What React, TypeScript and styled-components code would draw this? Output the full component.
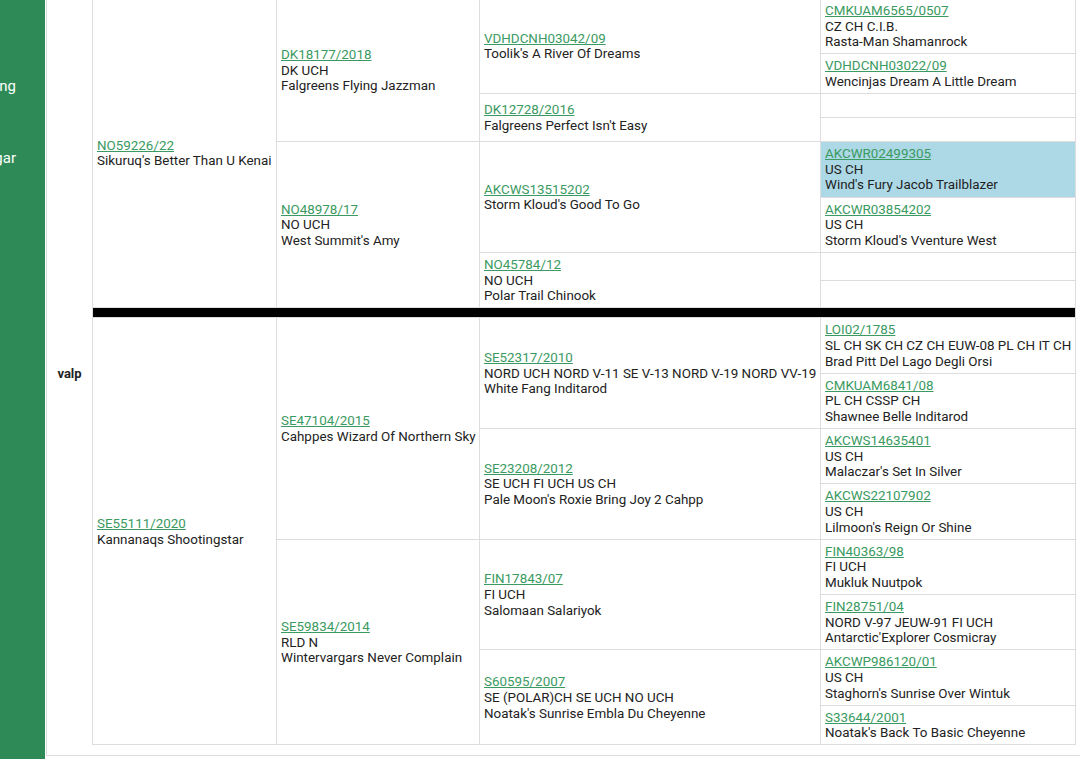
import React from "react";
import styled, { createGlobalStyle } from "styled-components";

const Global = createGlobalStyle`
  html, body { margin: 0; padding: 0; background: #fff; }
  body { font-family: Roboto, "Noto Sans", Arial, sans-serif; color: #222; height: 759px; overflow: hidden; }
`;

type Dog = { reg?: string; title?: string; name?: string; hl?: boolean };

const Page = styled.div`
  display: flex;
  height: 759px;
`;

const Sidebar = styled.nav`
  width: 45px;
  flex: none;
  background: #2e8b57;
  overflow: hidden;
  padding-top: 50px;
  box-sizing: border-box;
  display: flex;
  flex-direction: column;
`;

const NavItem = styled.div`
  height: 72px;
  display: flex;
  align-items: center;
  justify-content: flex-end;
  padding-right: 29px;
  white-space: nowrap;
  color: #fff;
  font-size: 15px;
`;

const Main = styled.main`
  margin-left: 1px;
  flex: 1;
  align-self: flex-start;
  border-left: 1px solid #ddd;
  border-bottom: 1px solid #ddd;
  padding-bottom: 10px;
  display: flex;
`;

const Label = styled.div`
  width: 45px;
  flex: none;
  display: flex;
  align-items: center;
  justify-content: center;
  padding-top: 2px;
  font-size: 13px;
  font-weight: 700;
  color: #222;
`;

const Table = styled.table`
  border-collapse: collapse;
  margin-top: -2px;
  table-layout: fixed;
  width: 983px;
  flex: none;
  font-size: 13.4px;
  line-height: 15.65px;
  border: 1px solid #ddd;
`;

const Cell = styled.td<{ $hl?: boolean }>`
  border: 1px solid #ddd;
  padding: 4px 4px 3.4px;
  vertical-align: middle;
  background: ${(p) => (p.$hl ? "#add8e6" : "transparent")};
  white-space: nowrap;
  overflow: hidden;
`;

const SepCell = styled.td`
  background: #000;
  height: 9px;
  padding: 0;
  border: 1px solid #ddd;
`;

const RegLink = styled.a`
  display: block;
  color: #3a9a61;
  text-decoration: underline;
`;

const Line = styled.div``;

const DogInfo = ({ d }: { d: Dog }) => {
  if (!d.reg && !d.name) return <>{"\u00a0"}</>;
  return (
    <>
      {d.reg && <RegLink href="#">{d.reg}</RegLink>}
      {d.title && <Line>{d.title}</Line>}
      {d.name && <Line>{d.name}</Line>}
    </>
  );
};

type Half = {
  g1: Dog;
  g2: Dog[];
  g3: Dog[];
  g4: Dog[];
};

const sire: Half = {
  g1: { reg: "NO59226/22", name: "Sikuruq's Better Than U Kenai" },
  g2: [
    { reg: "DK18177/2018", title: "DK UCH", name: "Falgreens Flying Jazzman" },
    { reg: "NO48978/17", title: "NO UCH", name: "West Summit's Amy" },
  ],
  g3: [
    { reg: "VDHDCNH03042/09", name: "Toolik's A River Of Dreams" },
    { reg: "DK12728/2016", name: "Falgreens Perfect Isn't Easy" },
    { reg: "AKCWS13515202", name: "Storm Kloud's Good To Go" },
    { reg: "NO45784/12", title: "NO UCH", name: "Polar Trail Chinook" },
  ],
  g4: [
    { reg: "CMKUAM6565/0507", title: "CZ CH C.I.B.", name: "Rasta-Man Shamanrock" },
    { reg: "VDHDCNH03022/09", name: "Wencinjas Dream A Little Dream" },
    {},
    {},
    { reg: "AKCWR02499305", title: "US CH", name: "Wind's Fury Jacob Trailblazer", hl: true },
    { reg: "AKCWR03854202", title: "US CH", name: "Storm Kloud's Vventure West" },
    {},
    {},
  ],
};

const dam: Half = {
  g1: { reg: "SE55111/2020", name: "Kannanaqs Shootingstar" },
  g2: [
    { reg: "SE47104/2015", name: "Cahppes Wizard Of Northern Sky" },
    { reg: "SE59834/2014", title: "RLD N", name: "Wintervargars Never Complain" },
  ],
  g3: [
    { reg: "SE52317/2010", title: "NORD UCH NORD V-11 SE V-13 NORD V-19 NORD VV-19", name: "White Fang Inditarod" },
    { reg: "SE23208/2012", title: "SE UCH FI UCH US CH", name: "Pale Moon's Roxie Bring Joy 2 Cahpp" },
    { reg: "FIN17843/07", title: "FI UCH", name: "Salomaan Salariyok" },
    { reg: "S60595/2007", title: "SE (POLAR)CH SE UCH NO UCH", name: "Noatak's Sunrise Embla Du Cheyenne" },
  ],
  g4: [
    { reg: "LOI02/1785", title: "SL CH SK CH CZ CH EUW-08 PL CH IT CH", name: "Brad Pitt Del Lago Degli Orsi" },
    { reg: "CMKUAM6841/08", title: "PL CH CSSP CH", name: "Shawnee Belle Inditarod" },
    { reg: "AKCWS14635401", title: "US CH", name: "Malaczar's Set In Silver" },
    { reg: "AKCWS22107902", title: "US CH", name: "Lilmoon's Reign Or Shine" },
    { reg: "FIN40363/98", title: "FI UCH", name: "Mukluk Nuutpok" },
    { reg: "FIN28751/04", title: "NORD V-97 JEUW-91 FI UCH", name: "Antarctic'Explorer Cosmicray" },
    { reg: "AKCWP986120/01", title: "US CH", name: "Staghorn's Sunrise Over Wintuk" },
    { reg: "S33644/2001", name: "Noatak's Back To Basic Cheyenne" },
  ],
};

const HalfRows = ({ h, k }: { h: Half; k: string }) => (
  <>
    {h.g4.map((d4, i) => (
      <tr key={k + i}>
        {i === 0 && (
          <Cell rowSpan={8}>
            <DogInfo d={h.g1} />
          </Cell>
        )}
        {i % 4 === 0 && (
          <Cell rowSpan={4}>
            <DogInfo d={h.g2[i / 4]} />
          </Cell>
        )}
        {i % 2 === 0 && (
          <Cell rowSpan={2}>
            <DogInfo d={h.g3[i / 2]} />
          </Cell>
        )}
        <Cell $hl={d4.hl}>
          <DogInfo d={d4} />
        </Cell>
      </tr>
    ))}
  </>
);

export default function App() {
  return (
    <>
      <Global />
      <Page>
        <Sidebar>
          <NavItem>Parning</NavItem>
          <NavItem>Tävlingar</NavItem>
        </Sidebar>
        <Main>
          <Label>valp</Label>
          <Table>
            <colgroup>
              <col style={{ width: 184 }} />
              <col style={{ width: 203 }} />
              <col style={{ width: 341 }} />
              <col style={{ width: 255 }} />
            </colgroup>
            <tbody>
              <HalfRows h={sire} k="s" />
              <tr>
                <SepCell colSpan={4} />
              </tr>
              <HalfRows h={dam} k="d" />
            </tbody>
          </Table>
        </Main>
      </Page>
    </>
  );
}
